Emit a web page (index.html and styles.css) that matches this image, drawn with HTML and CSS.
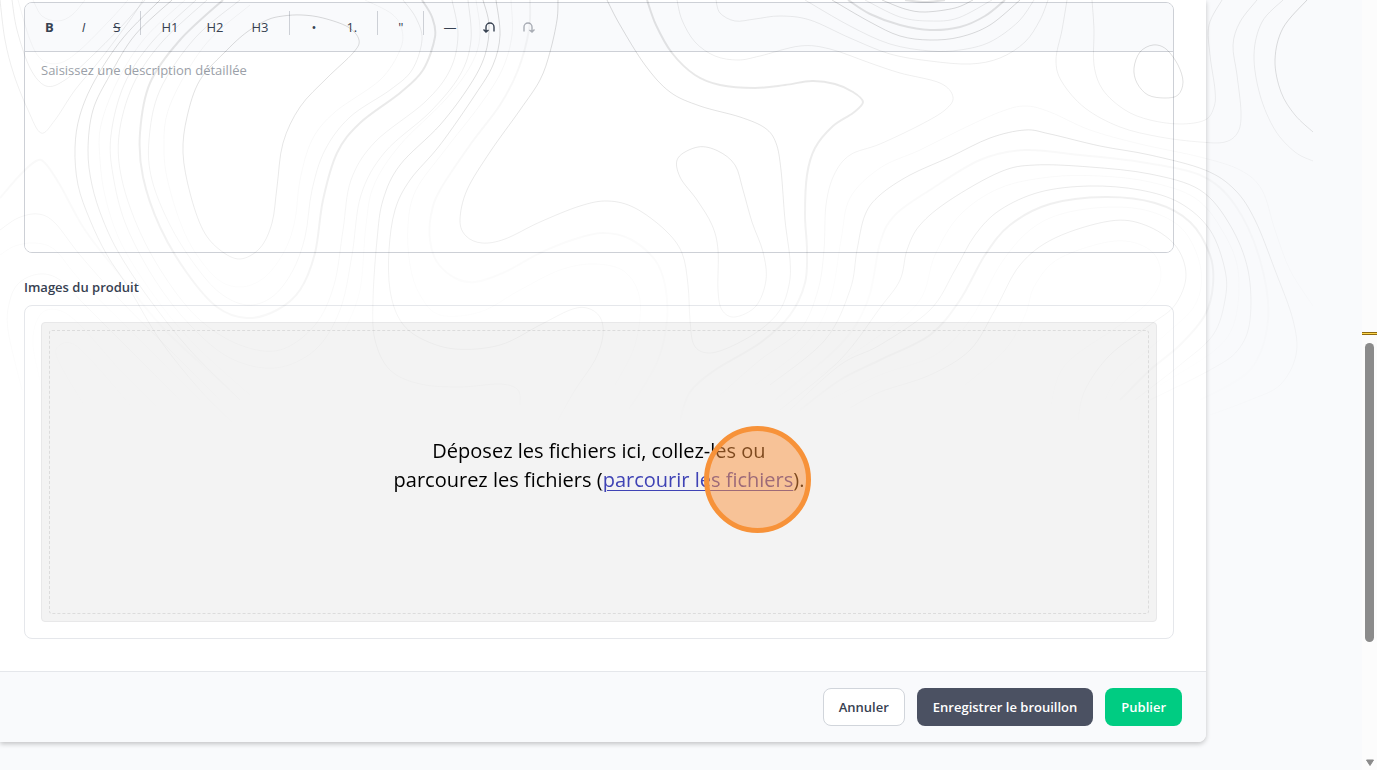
FILE: index.html
```html
<!DOCTYPE html>
<html lang="fr">
<head>
  <meta charset="UTF-8">
  <meta name="viewport" content="width=device-width, initial-scale=1">
  <title>Produit</title>
  <link rel="stylesheet" href="styles.css">
</head>
<body>
  <main class="page">
    <form class="card">
      <div class="card-body">
        <div class="editor">
          <div class="toolbar">
            <button type="button" class="tool"><b>B</b></button>
            <button type="button" class="tool"><i>I</i></button>
            <button type="button" class="tool"><s>S</s></button>
            <span class="separator"></span>
            <button type="button" class="tool">H1</button>
            <button type="button" class="tool">H2</button>
            <button type="button" class="tool">H3</button>
            <span class="separator"></span>
            <button type="button" class="tool wide">•</button>
            <button type="button" class="tool">1.</button>
            <span class="separator"></span>
            <button type="button" class="tool">"</button>
            <span class="separator"></span>
            <button type="button" class="tool icon">—</button>
            <button type="button" class="tool icon" aria-label="Annuler la saisie">
              <svg width="14" height="14" viewBox="0 0 14 14"><path d="M4 11.500V7a4 4 0 0 1 8 0v4.500M1.500 9.500L4 12l2.500-2"/></svg>
            </button>
            <button type="button" class="tool icon" aria-label="Rétablir" disabled>
              <svg width="14" height="14" viewBox="0 0 14 14"><path d="M10 11.500V7a4 4 0 0 0-8 0v4.500M12.500 9.500L10 12l-2.500-2"/></svg>
            </button>
          </div>
          <textarea class="description" aria-label="Description" placeholder="Saisissez une description détaillée"></textarea>
        </div>

        <label class="field-label" for="images">Images du produit</label>
        <div class="upload">
          <div class="dropzone">
            <input type="file" id="images" class="file-input" multiple>
            <p class="drop-text">Déposez les fichiers ici, collez-les ou<br>parcourez les fichiers (<a href="#images">parcourir les fichiers</a>).</p>
          </div>
        </div>
      </div>

      <footer class="card-footer">
        <button type="button" class="btn btn-light">Annuler</button>
        <button type="button" class="btn btn-dark">Enregistrer le brouillon</button>
        <button type="submit" class="btn btn-green">Publier</button>
      </footer>
    </form>
  </main>

  <div class="scrollbar">
    <span class="marker"></span>
    <span class="thumb"></span>
    <svg class="arrow" width="10" height="8" viewBox="0 0 10 8"><path d="M1.500 1h7l-3.500 5.500z"/></svg>
  </div>

  <svg class="contours" id="contours" width="1313" height="430" aria-hidden="true"></svg>
  <span class="click-spot"></span>

  <script src="contours.js"></script>
</body>
</html>
```

FILE: styles.css
```css
* {
  box-sizing: border-box;
}

body {
  margin: 0;
  display: flex;
  min-height: 100vh;
  overflow: hidden;
  background: #f9fafc;
  color: #374151;
  font-family: "Open Sans", "Noto Sans", sans-serif;
  font-size: 13px;
}

button,
textarea {
  font: inherit;
  color: inherit;
}

.page {
  flex: 1;
  min-width: 0;
}

.card {
  margin-right: 156px;
  background: #fff;
  border-radius: 0 0 8px 0;
  box-shadow: 0 2px 5px rgba(0, 0, 0, 0.22);
}

.card-body {
  padding: 2px 32px 32px 24px;
}

/* text editor */
.editor {
  border: 1px solid #cdd0d6;
  border-radius: 8px;
  overflow: hidden;
}

.toolbar {
  display: flex;
  gap: 4px;
  padding: 8px;
  background: #f9fafc;
  border-bottom: 1px solid #cdd0d6;
}

.tool {
  height: 32px;
  padding: 0 12px;
  border: 0;
  border-radius: 4px;
  background: none;
  line-height: 20px;
}

.tool.wide {
  padding: 0 14px;
}

.tool.icon {
  padding: 0 11px;
}

.tool svg {
  display: block;
  fill: none;
  stroke: #374151;
  stroke-width: 1.4;
}

.tool:disabled svg {
  stroke: #a9adb5;
}

.separator {
  width: 1px;
  height: 24px;
  margin: 0 4px;
  background: #cdd0d6;
}

.description {
  display: block;
  width: 100%;
  height: 200px;
  padding: 8px 16px;
  border: 0;
  outline: 0;
  resize: none;
  background: #fff;
  line-height: 20px;
}

.description::placeholder {
  color: #9b9fa8;
}

/* images */
.field-label {
  display: block;
  margin: 24px 0 8px;
  font-weight: 600;
  line-height: 20px;
}

.upload {
  padding: 16px;
  border: 1px solid #e5e7eb;
  border-radius: 8px;
}

.dropzone {
  position: relative;
  display: flex;
  align-items: center;
  justify-content: center;
  height: 300px;
  border: 1px solid #e8e8e9;
  border-radius: 4px;
  background: #f3f3f3;
}

.dropzone::before {
  content: "";
  position: absolute;
  inset: 7px;
  border: 1px dashed #dcdcdc;
  border-radius: 3px;
}

.file-input {
  position: absolute;
  inset: 0;
  width: 100%;
  opacity: 0;
}

.drop-text {
  position: relative;
  margin: 0;
  padding-bottom: 14px;
  color: #000;
  font-size: 20px;
  line-height: 29px;
  text-align: center;
}

.drop-text a {
  color: #3f43b5;
  text-decoration-thickness: 1px;
  text-underline-offset: 3px;
}

/* actions */
.card-footer {
  display: flex;
  justify-content: flex-end;
  gap: 12px;
  padding: 16px 24px;
  border-top: 1px solid #e5e7eb;
  border-radius: 0 0 8px 0;
  background: #f9fafc;
}

.btn {
  height: 38px;
  padding: 0 15px;
  border: 1px solid transparent;
  border-radius: 8px;
  font-weight: 600;
}

.btn-light {
  background: #fff;
  border-color: #d1d5db;
}

.btn-dark {
  background: #4b5162;
  color: #fff;
}

.btn-green {
  background: #00cc82;
  color: #fff;
}

/* scroll track */
.scrollbar {
  display: flex;
  flex-direction: column;
  align-items: center;
  width: 15px;
  height: 100vh;
  padding: 332px 0 3px;
  background: #fcfcfc;
}

.marker {
  width: 100%;
  height: 3px;
  border: 1px solid #8f6a10;
  border-width: 1px 0;
  background: #ffd84d;
}

.thumb {
  width: 9px;
  height: 299px;
  margin-top: 8px;
  border-radius: 5px;
  background: #8b8b8b;
}

.arrow {
  margin-top: auto;
  fill: #8b8b8b;
  stroke: #8b8b8b;
  stroke-linejoin: round;
}

/* overlays */
.contours {
  position: absolute;
  top: 0;
  left: 0;
  fill: none;
  stroke: #000;
  pointer-events: none;
  -webkit-mask-image: linear-gradient(#000, transparent);
  mask-image: linear-gradient(#000, transparent);
}

.line {
  stroke-opacity: 0.15;
}

.bold {
  stroke-opacity: 0.11;
  stroke-width: 2;
}

.soft {
  stroke-opacity: 0.08;
}

.faint {
  stroke-opacity: 0.04;
}

.click-spot {
  position: absolute;
  top: 426px;
  left: 704px;
  width: 107px;
  height: 107px;
  border: 5px solid #f79239;
  border-radius: 50%;
  background: rgba(251, 146, 60, 0.5);
  pointer-events: none;
}
```

FILE: contours.js
```js
// [style, points, closed]
const contours = [
  ["line", "302,15 323,18 348,27 359,40 353,53 327,78 300,107 283,143 277,187 272,223 260,248 240,259 220,250 203,230 190,193 183,153 187,117 200,80 227,50 247,32 267,20 283,16", true],
  ["bold", "223,0 180,40 150,83 140,133 143,177 160,227 187,273 217,307 247,318 277,310 300,290 315,253 323,200 337,153 360,123 400,93 423,70 435,37 432,17 422,0"],
  ["soft", "240,0 195,38 160,90 149,140 152,180 170,225 195,265 220,293 247,305 272,297 292,272 305,237 312,190 325,150 350,117 390,90 412,70 422,40 416,18 403,0"],
  ["faint", "250,5 205,45 170,105 164,150 170,190 188,240 215,277 240,287 265,277 285,250 295,220 300,180 312,140 335,112 380,80 400,50 402,30 392,14 365,0"],
  ["line", "160,0 123,38 95,80 80,115 75,148 78,185 90,220 107,255 130,290 160,340 200,390 240,430"],
  ["line", "172,0 135,35 110,75 93,110 88,150 92,185 103,220 120,255 150,300 190,350 240,400"],
  ["faint", "185,0 145,38 118,80 101,125 100,160 106,200 122,245 155,297 195,345 250,395"],
  ["soft", "196,0 152,42 124,85 111,135 113,175 126,225 155,280 190,325 230,358 275,368 315,350 340,310 352,255 361,195 385,152 430,112 460,75 471,40 468,0"],
  ["soft", "207,0 162,42 133,85 119,135 122,180 140,232 167,280 200,320 240,345 280,350 315,325 334,285 343,230 351,180 375,142 425,102 450,70 458,35 452,0"],
  ["soft", "0,0 5,40 14,75 28,110 41,133 55,120 75,90 100,60 130,20 143,0"],
  ["soft", "12,0 17,30 30,68 46,86 65,80 90,58 120,28 145,0"],
  ["faint", "18,0 30,40 42,60 60,63 80,50 110,20 128,0"],
  ["faint", "33,0 42,16 58,21 72,15 85,0"],
  ["bold faint", "0,198 20,175 36,161 45,163 60,185 85,230 120,275 165,330 230,390"],
  ["soft", "0,230 18,218 38,214 55,223 80,255 120,300 170,350 220,400"],
  ["faint", "0,255 15,246 35,243 55,250 80,280 130,330 200,400"],
  ["soft", "22,390 8,330 10,300 20,282 40,274 60,280 85,305 130,350 180,400"],
  ["faint", "45,400 33,345 40,315 58,310 80,325 120,370 160,410"],
  ["faint", "90,415 58,360 60,345 75,345 100,370 130,405"],

  ["line", "558,0 557,20 550,52 540,80 520,110 490,152 467,190 460,220 466,236 482,243 505,239 540,222 580,206 608,201 635,208 665,230 682,253 688,285 690,320 694,345 708,353 730,347 760,330 780,310 789,285 790,260 785,220 781,170 776,143 765,128 740,117 700,106 670,92 645,65 620,25 607,0"],
  ["bold", "647,0 656,25 672,53 695,75 720,85 755,88 785,85 812,81 835,84 853,92 863,102 853,113 833,126 815,148 807,175 805,215 807,250 805,283 790,315 760,343 715,370 690,392 680,420"],
  ["line", "698,147 718,151 735,165 743,190 752,222 763,252 766,280 756,306 735,317 722,310 718,290 718,250 712,225 697,200 680,177 678,158", true],
  ["bold faint", "530,0 529,30 518,70 500,105 470,145 440,190 431,215 430,240 437,262 455,278 475,282 505,272 540,253 575,239 603,233 630,239 655,260 665,285 667,320 658,360 635,400 620,420"],
  ["faint", "511,0 512,35 502,70 480,105 445,150 416,190 408,225 410,265 420,295 440,315 480,312 520,290 560,270 595,264 625,272 640,300 635,345 615,385"],
  ["line", "496,0 500,35 493,65 475,95 440,145 410,180 395,210 389,250 390,290 400,320 420,338 455,349 500,345 540,325 570,310 587,308 600,317 603,335 595,360 575,390 558,420"],
  ["line", "483,0 489,25 485,55 470,85 440,125 400,165 383,200 377,240 373,300 375,340 390,370 420,384 460,387 500,384 518,390 520,405"],
  ["faint", "476,0 480,35 471,65 445,100 400,145 374,185 366,225 360,290 345,330"],

  ["soft", "677,0 682,20 695,42 715,56 738,60 760,56 800,46 830,49 870,63 900,73 940,83 953,97 945,110 920,125 880,144 850,155 834,175 826,205 824,250 818,290 800,330 760,360 720,395"],
  ["soft", "716,0 720,13 735,21 755,19 780,16 810,20 850,38 890,54 930,61 970,64 1000,58 1025,42 1040,20 1048,0"],
  ["soft", "805,0 850,26 890,44 930,51 960,50 990,42 1018,22 1034,0"],
  ["line", "832,0 870,22 900,36 930,40 960,37 990,25 1020,0"],
  ["bold", "848,0 870,14 900,25 930,30 960,27 985,16 1005,0"],
  ["soft", "865,0 900,17 930,21 958,18 992,0"],
  ["line", "882,0 905,9 925,12 955,8 973,0"],
  ["bold", "905,0 925,2 945,0"],

  ["soft", "1067,0 1062,30 1056,60 1062,82 1085,108 1120,127 1160,137 1200,142 1225,142 1238,132 1241,112 1237,75 1233,45 1240,22 1257,0"],
  ["soft", "1092,0 1094,30 1094,65 1103,90 1125,110 1150,120 1180,124 1205,120 1214,107 1215,90 1210,55 1209,25 1222,0"],
  ["line", "1153,45 1166,49 1178,65 1183,82 1178,95 1165,98 1148,95 1137,83 1134,68 1140,52", true],
  ["soft", "1283,0 1262,22 1254,55 1260,95 1275,130 1295,152 1313,161"],
  ["line", "1307,0 1283,28 1275,60 1281,92 1295,115 1313,132"],

  ["faint", "755,385 805,345 830,300 841,240 850,198 880,168 920,150 960,130 1000,112 1025,106 1050,112 1090,130 1140,144 1200,157 1240,170 1262,190 1275,230 1290,270 1313,306"],
  ["line", "770,385 825,340 850,290 857,250 865,215 880,195 910,175 950,157 990,138 1025,130 1050,134 1100,146 1150,155 1205,170 1235,190 1255,220 1275,270 1293,320 1296,355 1280,385 1250,400 1210,415"],
  ["bold faint", "775,400 840,345 868,300 880,243 895,215 930,190 980,160 1025,150 1080,155 1140,162 1200,175 1235,205 1260,260 1268,320 1250,370 1200,400"],
  ["line", "780,410 840,360 880,308 900,280 907,250 920,225 950,200 1000,172 1035,165 1090,167 1150,174 1200,190 1230,225 1248,270 1250,320 1238,350 1210,370 1150,400"],
  ["faint", "820,375 880,335 920,300 935,255 960,215 1000,188 1050,177 1100,176 1150,182 1195,198 1222,230 1238,270 1235,320 1215,350 1160,385"],
  ["line", "790,410 840,365 880,345 930,310 955,270 975,235 1000,210 1040,192 1090,186 1140,190 1180,203 1210,230 1225,270 1225,300 1213,335 1180,365 1135,400"],
  ["bold", "800,410 840,380 880,360 930,335 960,300 985,255 1010,225 1050,204 1105,197 1155,203 1190,222 1210,255 1213,285 1205,315 1180,345 1150,370 1120,400"],
  ["faint", "830,400 880,375 935,355 970,320 1000,265 1030,230 1065,213 1115,207 1155,213 1185,232 1201,270 1195,305 1165,335 1120,375 1105,400"],
  ["line", "850,408 880,392 930,375 970,350 995,310 1020,265 1055,238 1110,221 1145,225 1175,245 1186,275 1175,305 1150,325 1110,355 1085,390 1078,420"],
  ["faint", "965,385 1005,350 1025,315 1035,285 1060,258 1115,241 1150,250 1161,275 1150,300 1120,325 1065,365 1050,410"]
];

// smooth curve through the points
function toPath(points, closed) {
  const n = points.length;
  const at = i => closed ? points[(i + n) % n] : points[Math.max(0, Math.min(n - 1, i))];
  let d = `M${points[0]}`;
  for (let i = 0; i < (closed ? n : n - 1); i++) {
    const [a, b, c, e] = [at(i - 1), at(i), at(i + 1), at(i + 2)];
    d += `C${b[0] + (c[0] - a[0]) / 6},${b[1] + (c[1] - a[1]) / 6} ${c[0] - (e[0] - b[0]) / 6},${c[1] - (e[1] - b[1]) / 6} ${c}`;
  }
  return d;
}

const svg = document.getElementById("contours");
contours.forEach(([style, text, closed]) => {
  const path = document.createElementNS("http://www.w3.org/2000/svg", "path");
  const points = text.split(" ").map(p => p.split(",").map(Number));
  path.setAttribute("class", style);
  path.setAttribute("d", toPath(points, closed));
  svg.appendChild(path);
});
```
